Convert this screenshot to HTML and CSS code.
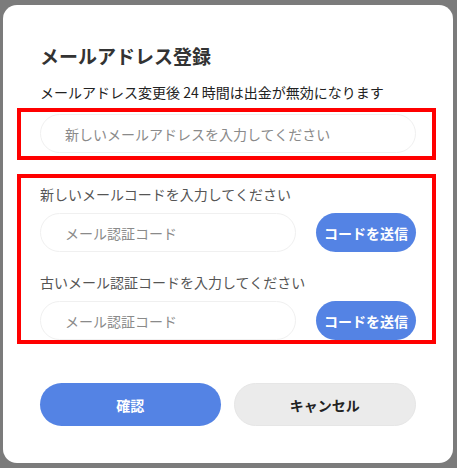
FILE: index.html
```html
<!DOCTYPE html>
<html lang="ja">
<head>
  <meta charset="UTF-8">
  <title>メールアドレス登録</title>
  <link rel="stylesheet" href="styles.css">
</head>
<body>
  <div class="overlay">
    <div class="modal">
      <h1 class="modal-title">メールアドレス登録</h1>
      <p class="notice">メールアドレス変更後 24 時間は出金が無効になります</p>

      <div class="mark-box first">
        <input class="field" type="text" placeholder="新しいメールアドレスを入力してください">
      </div>

      <div class="mark-box second">
        <label class="field-label">新しいメールコードを入力してください</label>
        <div class="code-row">
          <input class="field" type="text" placeholder="メール認証コード">
          <button class="send-btn">コードを送信</button>
        </div>

        <label class="field-label lower">古いメール認証コードを入力してください</label>
        <div class="code-row">
          <input class="field" type="text" placeholder="メール認証コード">
          <button class="send-btn">コードを送信</button>
        </div>
      </div>

      <div class="actions">
        <button class="btn confirm">確認</button>
        <button class="btn cancel">キャンセル</button>
      </div>
    </div>
  </div>
</body>
</html>
```

FILE: styles.css
```css
body {
  margin: 0;
  padding: 0;
  background-color: #7b7b7b;
  font-family: "Noto Sans CJK JP", "Noto Sans", sans-serif;
}

.overlay {
  padding: 5px 4px 5px 3px;
}

.modal {
  background-color: #fff;
  border-radius: 14px;
  height: 458px;
  box-sizing: border-box;
  padding: 37px 37px 37px 37px;
}

.modal-title {
  margin: 0;
  font-size: 19px;
  line-height: 27px;
  font-weight: 700;
  color: #333;
}

.notice {
  margin: 13px 0 0;
  font-size: 14px;
  line-height: 20px;
  color: #222;
}

.mark-box {
  border: 4px solid #f00;
  margin: 6px -20px 0 -23px;
  padding: 2px 16px 3px 19px;
}

.mark-box.second {
  margin-top: 14px;
  padding-top: 6px;
  padding-bottom: 0;
}

.field {
  display: block;
  box-sizing: border-box;
  width: 100%;
  height: 39px;
  border: 1px solid #f0f0f0;
  border-radius: 20px;
  padding: 0 24px;
  font-family: inherit;
  font-size: 14px;
  color: #333;
  background: #fff;
  outline: none;
}

.field::placeholder {
  color: #8a8a8a;
}

.field-label {
  display: block;
  font-size: 14px;
  line-height: 20px;
  color: #555;
}

.field-label.lower {
  margin-top: 20px;
}

.code-row {
  display: flex;
  gap: 20px;
  margin-top: 9px;
}

.code-row .field {
  flex: 1;
}

.send-btn {
  width: 100px;
  height: 39px;
  flex-shrink: 0;
  border: none;
  border-radius: 20px;
  background-color: #5483e4;
  color: #fff;
  font-family: inherit;
  font-size: 14px;
  font-weight: 700;
  padding: 0;
}

.actions {
  display: flex;
  gap: 13px;
  margin-top: 39px;
}

.btn {
  flex: 1;
  height: 43px;
  border-radius: 22px;
  font-family: inherit;
  font-size: 14px;
  font-weight: 700;
}

.confirm {
  border: none;
  background-color: #5483e4;
  color: #fff;
}

.cancel {
  border: 1px solid #e6e6e6;
  background-color: #ebebeb;
  color: #222;
}
```
